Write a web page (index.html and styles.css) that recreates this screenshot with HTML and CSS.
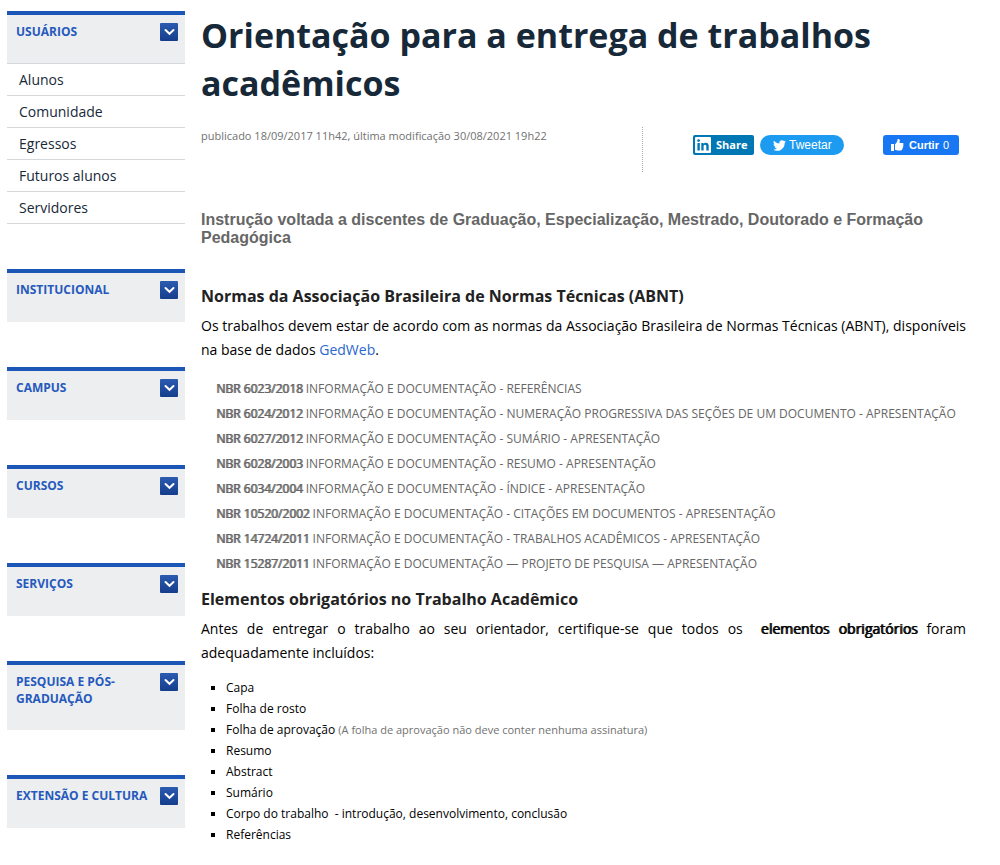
FILE: index.html
```html
<!DOCTYPE html>
<html lang="pt-BR">
<head>
<meta charset="utf-8">
<meta name="viewport" content="width=device-width, initial-scale=1">
<title>Orientação para a entrega de trabalhos acadêmicos</title>
<link rel="stylesheet" href="styles.css">
</head>
<body>
<svg class="sprite" aria-hidden="true">
  <symbol id="chevron" viewBox="0 0 18 18"><path d="M5.500 7l4 3.800L13.500 7" fill="none" stroke="#fff" stroke-width="2" stroke-linecap="round"/></symbol>
</svg>
<div class="page">
  <nav class="sidebar" aria-label="Navegação">
    <section class="menu">
      <h2 class="menu-title menu-title-open"><span>Usuários</span><button class="toggle" type="button" aria-label="Recolher Usuários"><svg><use href="#chevron"/></svg></button></h2>
      <ul class="menu-list">
        <li><a href="#">Alunos</a></li>
        <li><a href="#">Comunidade</a></li>
        <li><a href="#">Egressos</a></li>
        <li><a href="#">Futuros alunos</a></li>
        <li><a href="#">Servidores</a></li>
      </ul>
    </section>
    <section class="menu"><h2 class="menu-title"><span>Institucional</span><button class="toggle" type="button" aria-label="Expandir Institucional"><svg><use href="#chevron"/></svg></button></h2></section>
    <section class="menu"><h2 class="menu-title"><span>Campus</span><button class="toggle" type="button" aria-label="Expandir Campus"><svg><use href="#chevron"/></svg></button></h2></section>
    <section class="menu"><h2 class="menu-title"><span>Cursos</span><button class="toggle" type="button" aria-label="Expandir Cursos"><svg><use href="#chevron"/></svg></button></h2></section>
    <section class="menu"><h2 class="menu-title"><span>Serviços</span><button class="toggle" type="button" aria-label="Expandir Serviços"><svg><use href="#chevron"/></svg></button></h2></section>
    <section class="menu"><h2 class="menu-title"><span>Pesquisa e Pós-Graduação</span><button class="toggle" type="button" aria-label="Expandir Pesquisa e Pós-Graduação"><svg><use href="#chevron"/></svg></button></h2></section>
    <section class="menu"><h2 class="menu-title"><span>Extensão e Cultura</span><button class="toggle" type="button" aria-label="Expandir Extensão e Cultura"><svg><use href="#chevron"/></svg></button></h2></section>
  </nav>
  <main class="content">
    <h1 class="title">Orientação para a entrega de trabalhos acadêmicos</h1>
    <div class="byline">
      <p class="dates">publicado 18/09/2017 11h42, última modificação 30/08/2021 19h22</p>
      <div class="social">
        <button class="share share-linkedin" type="button"><svg class="icon-linkedin" viewBox="0 0 16 16"><rect width="16" height="16" rx="1" fill="#fff"/><g fill="#0077b5"><circle cx="3.600" cy="3.600" r="1.400"/><path d="M2.400 6h2.400v7.600H2.400zM6.300 6h2.300v1.100c.5-.8 1.300-1.300 2.300-1.300 2.100 0 2.800 1.300 2.800 3.400v4.400h-2.400V9.700c0-1-.2-1.900-1.300-1.900-1.200 0-1.400.9-1.400 1.900v3.900H6.300z"/></g></svg>Share</button>
        <button class="share share-twitter" type="button"><svg class="icon-twitter" viewBox="0 0 24 24"><path fill="#fff" d="M23.950 4.570a10 10 0 0 1-2.820.77 4.960 4.960 0 0 0 2.160-2.720c-.95.550-2 .96-3.130 1.180a4.920 4.920 0 0 0-8.380 4.480C7.690 8.100 4.070 6.130 1.640 3.160a4.820 4.820 0 0 0-.67 2.480c0 1.710.87 3.210 2.190 4.100a4.900 4.900 0 0 1-2.230-.62v.06a4.920 4.920 0 0 0 3.950 4.830 5 5 0 0 1-2.210.08 4.940 4.940 0 0 0 4.600 3.420A9.870 9.870 0 0 1 0 19.540a13.990 13.990 0 0 0 7.560 2.210c9.050 0 14-7.500 14-13.980 0-.21 0-.42-.02-.63a9.940 9.940 0 0 0 2.410-2.570z"/></svg>Tweetar</button>
        <button class="share share-facebook" type="button"><svg class="icon-like" viewBox="0 0 14 14"><path fill="#fff" d="M0 6h3v7H0zM4 6.200C5.600 5.200 6.500 3.300 6.600 1.300c.1-.6 2-.5 2.200 1.100.1 1-.2 1.900-.5 2.700h3.200c1.200 0 1.400 1.600.5 2 .7.500.6 1.600-.2 2 .4.700.1 1.500-.6 1.700.2 1-.4 1.700-1.400 1.700H7c-1.200 0-2-.3-3-.8z"/></svg><b>Curtir</b><span>0</span></button>
      </div>
    </div>
    <p class="lead">Instrução voltada a discentes de Graduação, Especialização, Mestrado, Doutorado e Formação Pedagógica</p>
    <h3 class="heading">Normas da Associação Brasileira de Normas Técnicas (ABNT)</h3>
    <p class="text">Os trabalhos devem estar de acordo com as normas da Associação Brasileira de Normas Técnicas (ABNT), disponíveis na base de dados <a href="#">GedWeb</a>.</p>
    <ul class="norms">
      <li><span class="strong">NBR 6023/2018</span> INFORMAÇÃO E DOCUMENTAÇÃO - REFERÊNCIAS</li>
      <li><span class="strong">NBR 6024/2012</span> INFORMAÇÃO E DOCUMENTAÇÃO - NUMERAÇÃO PROGRESSIVA DAS SEÇÕES DE UM DOCUMENTO - APRESENTAÇÃO</li>
      <li><span class="strong">NBR 6027/2012</span> INFORMAÇÃO E DOCUMENTAÇÃO - SUMÁRIO - APRESENTAÇÃO</li>
      <li><span class="strong">NBR 6028/2003</span> INFORMAÇÃO E DOCUMENTAÇÃO - RESUMO - APRESENTAÇÃO</li>
      <li><span class="strong">NBR 6034/2004</span> INFORMAÇÃO E DOCUMENTAÇÃO - ÍNDICE - APRESENTAÇÃO</li>
      <li><span class="strong">NBR 10520/2002</span> INFORMAÇÃO E DOCUMENTAÇÃO - CITAÇÕES EM DOCUMENTOS - APRESENTAÇÃO</li>
      <li><span class="strong">NBR 14724/2011</span> INFORMAÇÃO E DOCUMENTAÇÃO - TRABALHOS ACADÊMICOS - APRESENTAÇÃO</li>
      <li><span class="strong">NBR 15287/2011</span> INFORMAÇÃO E DOCUMENTAÇÃO — PROJETO DE PESQUISA — APRESENTAÇÃO</li>
    </ul>
    <h3 class="heading">Elementos obrigatórios no Trabalho Acadêmico</h3>
    <p class="text">Antes de entregar o trabalho ao seu orientador, certifique-se que todos os &nbsp;<span class="strong">elementos obrigatórios</span> foram adequadamente incluídos:</p>
    <ul class="elements">
      <li>Capa</li>
      <li>Folha de rosto</li>
      <li>Folha de aprovação <small>(A folha de aprovação não deve conter nenhuma assinatura)</small></li>
      <li>Resumo</li>
      <li>Abstract</li>
      <li>Sumário</li>
      <li>Corpo do trabalho &nbsp;- introdução, desenvolvimento, conclusão</li>
      <li>Referências</li>
    </ul>
  </main>
</div>
</body>
</html>
```
FILE: styles.css
```css
* { box-sizing: border-box; }
body { margin: 0; background: #fff; color: #000; font-family: "Open Sans", "Noto Sans", sans-serif; }
h1, h2, h3, p, ul { margin: 0; padding: 0; }
a { color: #2c66ce; text-decoration: none; }
button { border: 0; padding: 0; cursor: pointer; }
.sprite { display: none; }
.page { display: grid; grid-template-columns: 178px minmax(0, 1fr); gap: 16px; padding: 11px 34px 0 7px; }

.menu { margin-bottom: 45px; }
.menu-title { display: flex; justify-content: space-between; align-items: flex-start; min-height: 53px; padding: 8px 7px 23px 9px; border-top: 4px solid #1c57b8; background: #eceeef; color: #2659bd; font-size: 12px; line-height: 17px; font-weight: 700; text-transform: uppercase; }
.menu-title-open { box-shadow: inset 0 -1px #d5d8da; }
.toggle { flex: none; width: 18px; height: 18px; border-radius: 1px; background: linear-gradient(#2b5bb0, #163d8c); }
.toggle svg { display: block; width: 18px; height: 18px; }
.menu-list { list-style: none; }
.menu-list a { display: block; padding: 0 12px; border-bottom: 1px solid #d5d8da; color: #172938; font-size: 14px; line-height: 31px; }

.title { color: #172938; font-size: 34px; line-height: 48px; font-weight: 700; }
.byline { display: flex; justify-content: space-between; align-items: flex-start; margin-top: 20px; }
.dates { color: #717171; font-size: 11px; line-height: 18px; }
.social { display: flex; width: 324px; height: 45px; padding: 8px 0 0 50px; border-left: 1px dotted #aaa; }
.share { display: flex; align-items: center; height: 20px; color: #fff; font-family: "Liberation Sans", Arial, sans-serif; font-size: 12px; line-height: 20px; }
.share-linkedin { gap: 5px; width: 61px; padding-left: 2px; border-radius: 2px; background: #0077b5; font-family: "Open Sans", sans-serif; font-size: 11px; font-weight: 700; }
.share-twitter { gap: 3px; width: 84px; margin-left: 6px; padding-left: 13px; border-radius: 10px; background: #1d9bf0; }
.share-facebook { gap: 4px; width: 76px; margin-left: 39px; padding-left: 8px; border-radius: 3px; background: #1877f2; font-size: 11px; }
.icon-linkedin { width: 16px; height: 16px; }
.icon-twitter { width: 13px; height: 13px; }
.icon-like { width: 14px; height: 14px; }

.lead { margin-top: 39px; color: #666; font-family: "Liberation Sans", Arial, sans-serif; font-size: 16px; line-height: 18px; font-weight: 700; }
.heading { color: #222; font-size: 16px; line-height: 24px; font-weight: 700; }
.lead + .heading { margin-top: 37px; }
.text { margin-top: 6px; font-size: 14px; line-height: 24px; text-align: justify; }
.strong { text-shadow: 1px 0 currentColor; }
.norms { list-style: none; margin: 14px 0 11px; padding-left: 15px; color: #666; font-size: 12px; line-height: 25px; }
.elements { margin-top: 12px; padding-left: 25px; list-style: square; font-size: 12px; line-height: 21px; }
.elements small { color: #717171; font-size: 11px; }
```
